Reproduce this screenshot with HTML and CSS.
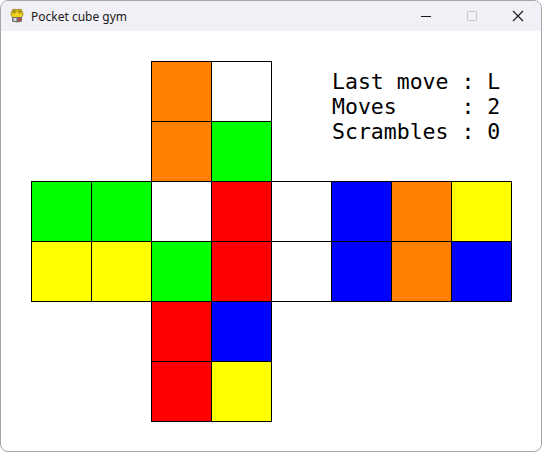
FILE: index.html
```html
<!DOCTYPE html>
<html>
<head>
<meta charset="utf-8">
<link rel="stylesheet" href="styles.css">
</head>
<body>
<div class="window">
  <div class="titlebar">
    <svg class="appicon" width="16" height="16" viewBox="0 0 16 16">
      <ellipse cx="8" cy="10.5" rx="5" ry="4" fill="#8a8a7a"/>
      <ellipse cx="8" cy="6" rx="6" ry="4.5" fill="#f2d21b" stroke="#8a7a10" stroke-width="0.8"/>
      <circle cx="5" cy="3.2" r="2" fill="#f2d21b" stroke="#8a7a10" stroke-width="0.8"/>
      <circle cx="11" cy="3.2" r="2" fill="#f2d21b" stroke="#8a7a10" stroke-width="0.8"/>
      <circle cx="5" cy="3.2" r="0.8" fill="#333"/>
      <circle cx="11" cy="3.2" r="0.8" fill="#333"/>
      <rect x="3" y="9" width="10" height="5" rx="1.5" fill="#6f6f6f"/>
      <rect x="4.5" y="10" width="3" height="3" fill="#d8d8d8"/>
      <rect x="9" y="10" width="3" height="3" fill="#c05050"/>
    </svg>
    <span class="title">Pocket cube gym</span>
    <div class="controls">
      <div class="ctl">
        <svg width="10" height="10" viewBox="0 0 10 10"><line x1="0" y1="5.5" x2="10" y2="5.5" stroke="#1a1a1a" stroke-width="1"/></svg>
      </div>
      <div class="ctl">
        <svg width="10" height="10" viewBox="0 0 10 10"><rect x="0.5" y="0.5" width="9" height="9" rx="1" fill="none" stroke="#c4c4c8" stroke-width="1"/></svg>
      </div>
      <div class="ctl">
        <svg width="12" height="12" viewBox="0 0 12 12"><path d="M1 1 L11 11 M11 1 L1 11" stroke="#1a1a1a" stroke-width="1.1" fill="none"/></svg>
      </div>
    </div>
  </div>
  <div class="content">
    <div class="net">
      <div class="cell c-orange" style="grid-column:3;grid-row:1"></div>
      <div class="cell c-white" style="grid-column:4;grid-row:1"></div>
      <div class="cell c-orange" style="grid-column:3;grid-row:2"></div>
      <div class="cell c-green" style="grid-column:4;grid-row:2"></div>

      <div class="cell c-green" style="grid-column:1;grid-row:3"></div>
      <div class="cell c-green" style="grid-column:2;grid-row:3"></div>
      <div class="cell c-white" style="grid-column:3;grid-row:3"></div>
      <div class="cell c-red" style="grid-column:4;grid-row:3"></div>
      <div class="cell c-white" style="grid-column:5;grid-row:3"></div>
      <div class="cell c-blue" style="grid-column:6;grid-row:3"></div>
      <div class="cell c-orange" style="grid-column:7;grid-row:3"></div>
      <div class="cell c-yellow" style="grid-column:8;grid-row:3"></div>

      <div class="cell c-yellow" style="grid-column:1;grid-row:4"></div>
      <div class="cell c-yellow" style="grid-column:2;grid-row:4"></div>
      <div class="cell c-green" style="grid-column:3;grid-row:4"></div>
      <div class="cell c-red" style="grid-column:4;grid-row:4"></div>
      <div class="cell c-white" style="grid-column:5;grid-row:4"></div>
      <div class="cell c-blue" style="grid-column:6;grid-row:4"></div>
      <div class="cell c-orange" style="grid-column:7;grid-row:4"></div>
      <div class="cell c-blue" style="grid-column:8;grid-row:4"></div>

      <div class="cell c-red" style="grid-column:3;grid-row:5"></div>
      <div class="cell c-blue" style="grid-column:4;grid-row:5"></div>
      <div class="cell c-red" style="grid-column:3;grid-row:6"></div>
      <div class="cell c-yellow" style="grid-column:4;grid-row:6"></div>

      <div class="info"><div class="line">Last move : L</div><div class="line">Moves     : 2</div><div class="line">Scrambles : 0</div></div>
    </div>
  </div>
</div>
</body>
</html>
```
FILE: styles.css
```css
html, body {
  margin: 0;
  padding: 0;
  background: #ffffff;
}
.window {
  width: 542px;
  height: 452px;
  box-sizing: border-box;
  border: 1px solid #a6a6a6;
  border-radius: 8px;
  overflow: hidden;
  background: #ffffff;
  display: flex;
  flex-direction: column;
}
.titlebar {
  height: 30px;
  background: #f0f0f6;
  display: flex;
  align-items: center;
  flex: none;
}
.appicon {
  margin-left: 8px;
  flex: none;
}
.title {
  margin-left: 6px;
  font-family: "Noto Sans", "Open Sans", sans-serif;
  font-size: 12px;
  color: #1a1a1a;
}
.controls {
  margin-left: auto;
  display: flex;
  height: 30px;
}
.ctl {
  width: 46px;
  height: 30px;
  display: flex;
  align-items: center;
  justify-content: center;
}
.content {
  flex: 1;
  position: relative;
}
.net {
  display: grid;
  grid-template-columns: repeat(8, 60px);
  grid-template-rows: repeat(6, 60px);
  margin-left: 30px;
  margin-top: 30px;
  width: 481px;
}
.cell {
  width: 61px;
  height: 61px;
  box-sizing: border-box;
  border: 1px solid #000;
}
.c-orange { background: #ff8000; }
.c-white { background: #ffffff; }
.c-green { background: #00ff00; }
.c-red { background: #ff0000; }
.c-blue { background: #0000ff; }
.c-yellow { background: #ffff00; }
.info {
  grid-column: 6 / 9;
  grid-row: 1 / 3;
  align-self: start;
  font-family: "DejaVu Sans Mono", "Liberation Mono", monospace;
  font-size: 21.5px;
  line-height: 25px;
  color: #000;
  padding-left: 1px;
  padding-top: 8px;
}
.line {
  white-space: pre;
}
```
